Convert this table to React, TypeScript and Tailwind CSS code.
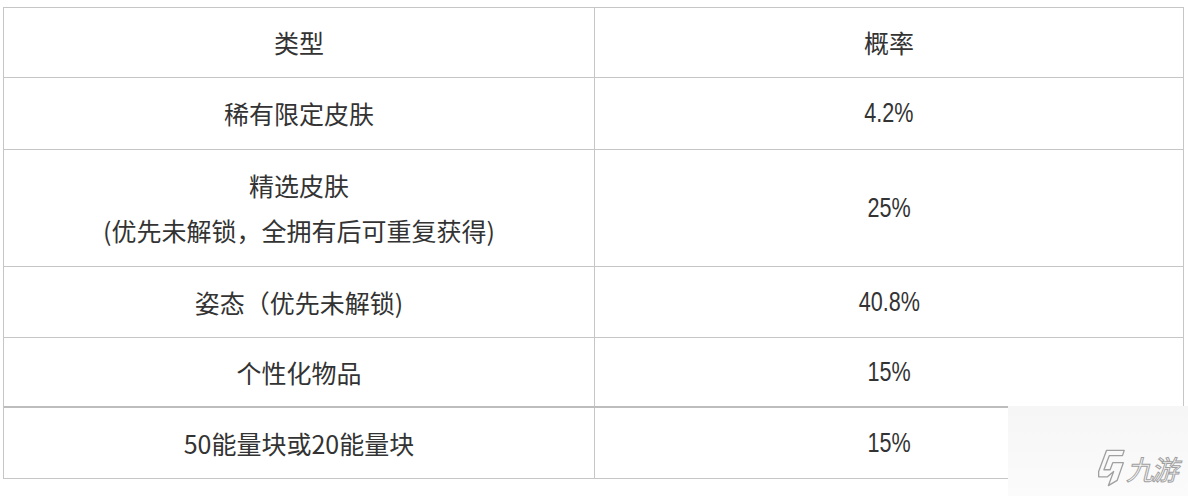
import React from "react";

const rows: { h: string; left: React.ReactNode; right: string }[] = [
  { h: "h-[70px]", left: "类型", right: "概率" },
  { h: "h-[72px]", left: "稀有限定皮肤", right: "4.2%" },
  {
    h: "h-[117px]",
    left: (
      <>
        <div>精选皮肤</div>
        <div>(优先未解锁，全拥有后可重复获得)</div>
      </>
    ),
    right: "25%",
  },
  { h: "h-[71px]", left: "姿态（优先未解锁)", right: "40.8%" },
  { h: "h-[70px]", left: "个性化物品", right: "15%" },
  { h: "h-[71px]", left: "50能量块或20能量块", right: "15%" },
];

export default function App() {
  return (
    <div
      className="relative w-[1188px] h-[496px] bg-white overflow-hidden text-[#333] text-[25px] leading-[45px]"
      style={{ fontFamily: '"Noto Sans CJK SC", sans-serif' }}
    >
      <div className="ml-[3px] mt-[7px] w-[1181px] border-l border-t border-[#c6c6c6]">
        {rows.map((r, i) => (
          <div
            key={i}
            className={`grid grid-cols-[591px_589px] ${r.h} border-b ${i === 4 ? "border-b-2 border-[#bdbdbd]" : "border-[#c6c6c6]"}`}
          >
            <div className="flex flex-col items-center justify-center text-center border-r border-[#c6c6c6]">
              {r.left}
            </div>
            <div className="flex items-center justify-center border-r border-[#c6c6c6]">
              {i === 0 ? (
                r.right
              ) : (
                <span
                  className="inline-block scale-x-[0.8] text-[27px]"
                  style={{ fontFamily: '"Liberation Sans", Arial, sans-serif' }}
                >
                  {r.right}
                </span>
              )}
            </div>
          </div>
        ))}
      </div>

      {/* watermark */}
      <div className="absolute left-[1008px] top-[406px] w-[180px] h-[90px] bg-gradient-to-b from-[#f6f6f6] to-[#fbfbfb]">
        <div className="absolute left-[88px] top-[40px] flex items-center gap-[3px] whitespace-nowrap">
          <svg width="30" height="44" viewBox="0 0 34 44" fill="none" stroke="#a0a0a0" strokeWidth="1.5" strokeLinejoin="round">
            <path d="M12 2 L32 2 L30 8 L15 8 L9 24 L16 24 L19 16 L31 16 L24 36 L14 42 L17 34 L20 26 L13 32 L3 32 L3 26 Z" />
          </svg>
          <span
            className="inline-block text-[27px] leading-none text-transparent tracking-[-2px] whitespace-nowrap"
            style={{ WebkitTextStroke: "1px #a0a0a0", fontFamily: '"Noto Sans CJK SC", sans-serif', transform: "skewX(-14deg)" }}
          >
            九游
          </span>
        </div>
      </div>
    </div>
  );
}
